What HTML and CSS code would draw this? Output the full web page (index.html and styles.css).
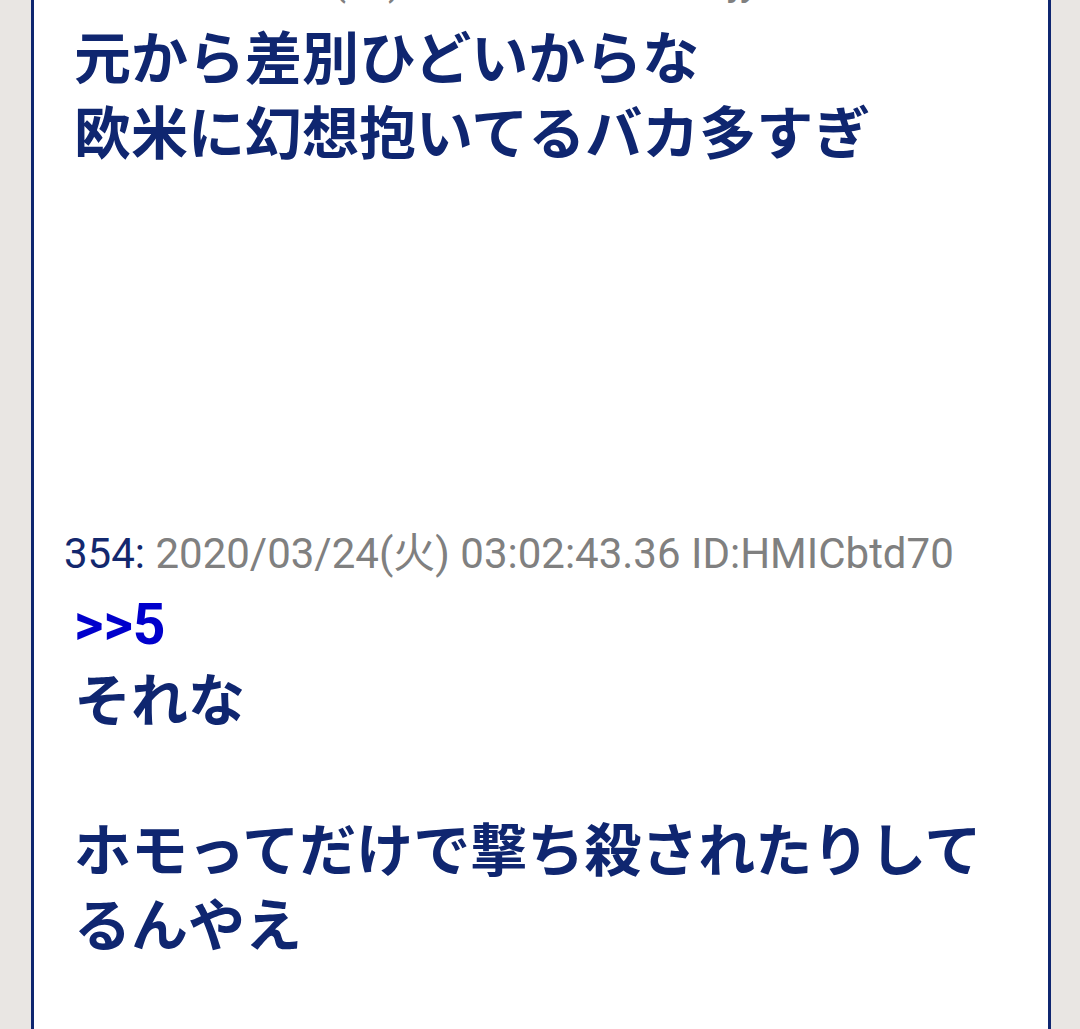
FILE: index.html
```html
<!DOCTYPE html>
<html lang="ja">
<head>
    <meta charset="UTF-8">
    <meta name="viewport" content="width=device-width, initial-scale=1.0">
    <title>スレッド</title>
    <link rel="stylesheet" href="styles.css">
</head>
<body>

    <div class="thread">

        <div class="post post-prev">
            <div class="post-head"><span class="num">5:</span> 2020/03/24(火) 02:41:13.50 ID:MjyOuBZ2O</div>
            <div class="post-body">元から差別ひどいからな<br>欧米に幻想抱いてるバカ多すぎ</div>
        </div>

        <div class="post">
            <div class="post-head"><span class="num">354:</span> 2020/03/24(火) 03:02:43.36 ID:HMICbtd70</div>
            <div class="post-body"><a class="anchor" href="#">&gt;&gt;5</a>それな<br><br>ホモってだけで撃ち殺されたりして<br>るんやえ</div>
        </div>

    </div>

</body>
</html>
```

FILE: styles.css
```css
body {
    margin: 0;
    padding: 0;
    background-color: #e9e6e3;
    overflow: hidden;
}

/* white thread column with the navy side rules */
.thread {
    display: flow-root;
    margin: 0 29px 0 31px;
    min-height: 100vh;
    background-color: #ffffff;
    border-left: 3px solid #0f2670;
    border-right: 3px solid #0f2670;
    padding: 0 30px;
}

/* the post above is scrolled partly out of view */
.post-prev {
    margin-top: -44px;
    margin-bottom: 363px;
}

.post-head {
    font-family: Roboto, "Noto Sans CJK JP", sans-serif;
    font-size: 42px;
    line-height: 48px;
    color: #808080;
    white-space: nowrap;
}

.post-head .num {
    color: #13286e;
}

.post-body {
    font-family: "Noto Sans CJK JP", sans-serif;
    font-weight: bold;
    font-size: 57px;
    line-height: 75px;
    color: #0f2670;
    padding-left: 10px;
    margin-top: 13px;
}

/* reply link sits on its own, slightly tighter line */
.anchor {
    display: block;
    font-family: Roboto, sans-serif;
    line-height: 68px;
    color: #0000cc;
    text-decoration: none;
}
```
